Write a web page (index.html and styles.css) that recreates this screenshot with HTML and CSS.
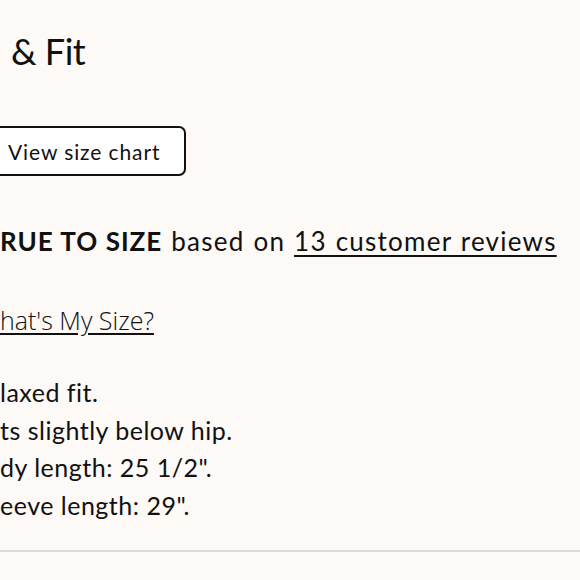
FILE: index.html
```html
<!DOCTYPE html>
<html>
<head>
<meta charset="utf-8">
<link rel="stylesheet" href="styles.css">
</head>
<body>
<section class="size-fit">
  <h2 class="title">&amp; Fit</h2>
  <div class="chart-row"><button class="chart-btn">View size chart</button></div>
  <p class="rating"><strong>RUE TO SIZE</strong> based on <a href="#" class="reviews">13 customer reviews</a></p>
  <p class="my-size"><a href="#">hat's My Size?</a></p>
  <ul class="details">
    <li>laxed fit.</li>
    <li>ts slightly below hip.</li>
    <li>dy length: 25 1/2".</li>
    <li>eeve length: 29".</li>
  </ul>
  <hr class="divider">
</section>
</body>
</html>
```
FILE: styles.css
```css
html, body {
  margin: 0;
  padding: 0;
  background: #fcf9f6;
}
body {
  font-family: "Lato", "Liberation Sans", sans-serif;
  color: #111;
  font-variant-ligatures: none;
}
.size-fit {
  display: flex;
  flex-direction: column;
  padding-top: 28px;
}
.title {
  margin: 0 0 0 11px;
  font-size: 36px;
  font-weight: 400;
  line-height: 46px;
  letter-spacing: -0.5px;
}
.chart-row {
  margin-top: 52px;
}
.chart-btn {
  margin-left: -10px;
  height: 50px;
  padding: 0 24px 0 16px;
  background: #fff;
  border: 2px solid #111;
  border-radius: 7px;
  font-family: inherit;
  font-size: 21px;
  letter-spacing: 0.9px;
  color: #111;
}
.rating {
  margin: 49px 0 0 0;
  font-size: 26px;
  line-height: 32px;
  letter-spacing: 1.25px;
  word-spacing: 1px;
}
.rating strong {
  font-weight: 700;
  letter-spacing: 1px;
  word-spacing: 0;
}
.reviews {
  color: #111;
  text-decoration: underline;
  text-decoration-thickness: 2px;
  text-underline-offset: 4px;
}
.my-size {
  margin: 48px 0 0 0;
  font-family: "Open Sans", sans-serif;
  font-weight: 300;
  font-size: 25px;
  line-height: 30px;
}
.my-size a {
  color: #111;
  text-decoration: underline;
  text-underline-offset: 3px;
}
.details {
  list-style: none;
  margin: 39px 0 0 0;
  padding: 0;
  font-size: 25px;
  line-height: 37.5px;
  letter-spacing: 0.5px;
}
.divider {
  margin: 26px 0 0 0;
  border: 0;
  border-top: 2px solid #dedad7;
}
```
